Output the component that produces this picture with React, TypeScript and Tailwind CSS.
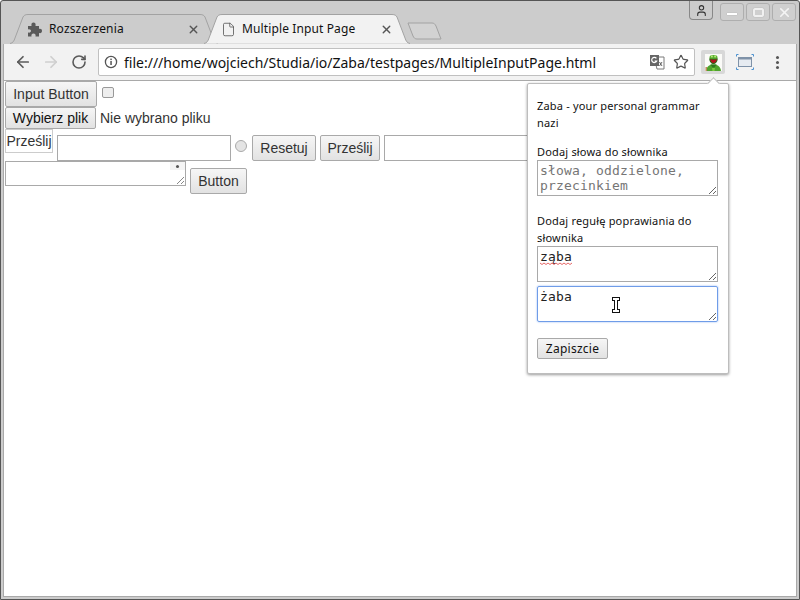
import { ArrowLeft, ArrowRight, RotateCw, Star, File, X, User } from 'lucide-react'

const chrome = { fontFamily: '"Noto Sans", sans-serif' }
const page = { fontFamily: '"Liberation Sans", Arial, sans-serif' }
const mono = { fontFamily: '"DejaVu Sans Mono", monospace' }

function TabShape({ fill, width }: { fill: string; width: number }) {
  return (
    <svg className="absolute inset-0" width={width} height={30} viewBox={`0 0 ${width} 30`}>
      <path
        d={`M0 29.5 C3 29 4 27 5 24 L13 3 C14 1.5 15 0.5 18 0.5 L${width - 18} 0.5 C${width - 15} 0.5 ${width - 14} 1.5 ${width - 13} 3 L${width - 5} 24 C${width - 4} 27 ${width - 3} 29 ${width} 29.5`}
        fill={fill}
        stroke="#a2a2a2"
      />
    </svg>
  )
}

function WinButton({ children }: { children: React.ReactNode }) {
  return (
    <div className="flex h-[18px] w-[24px] items-center justify-center rounded-[3px] border border-[#aeaeae] bg-[#cfcfcf]">
      {children}
    </div>
  )
}

function PageButton({ label, className }: { label: string; className: string }) {
  return (
    <button
      className={`rounded-[2px] border border-[#a9a9a9] bg-gradient-to-b from-[#f6f6f6] to-[#e2e2e2] text-[14px] text-[#333] ${className}`}
    >
      {label}
    </button>
  )
}

function PuzzleIcon() {
  return (
    <svg className="relative" width="15" height="15" viewBox="0 0 15 15">
      <path
        d="M1 4 H4.5 C4 1.5 5 0.5 6.5 0.5 C8 0.5 9 1.5 8.5 4 H12 V7 C14 6.5 15 7.5 15 9 C15 10.5 14 11.5 12 11 V14.5 H8.5 C9 12.5 8 11.5 6.5 11.5 C5 11.5 4 12.5 4.5 14.5 H1 V10.5 C3 11 4 10 4 9 C4 8 3 7 1 7.5 Z"
        fill="#5a5a5a"
      />
    </svg>
  )
}

function Kermit() {
  return (
    <svg width="17" height="17" viewBox="0 0 17 17">
      <rect width="17" height="17" fill="#fbfbf8" />
      <path d="M1 17 C1.5 13 3.5 11.5 6 10.5 H11 C13.5 11.5 15.5 13 16 17 Z" fill="#4fa32c" />
      <path d="M5.5 10.5 H11.5 L9.5 13.5 H7.5 Z" fill="#2f7a1c" />
      <path d="M7 14 H10 L9.5 17 H7.5 Z" fill="#7ccc3f" />
      <path d="M0.5 13 H2 V17 H0.5 Z" fill="#c08a5a" />
      <ellipse cx="8.5" cy="3.4" rx="4" ry="2.4" fill="#5cb032" />
      <circle cx="6.9" cy="2.4" r="1" fill="#b7e67a" />
      <circle cx="10.1" cy="2.4" r="1" fill="#b7e67a" />
      <path d="M4.2 4.2 C6 5 11 5 12.8 4.2 C12.8 8 10.5 10 8.5 10 C6.5 10 4.2 8 4.2 4.2 Z" fill="#2c6e1a" />
      <path d="M5.2 5.2 C7 5.8 10 5.8 11.8 5.2 C11.6 7.6 10 9 8.5 9 C7 9 5.4 7.6 5.2 5.2 Z" fill="#b3141c" />
    </svg>
  )
}

function TranslateIcon() {
  return (
    <svg width="16" height="16" viewBox="0 0 16 16">
      <path d="M5 3 H15 V15 H8 Z" fill="#fff" stroke="#7a7a7a" />
      <rect x="1" y="1" width="9" height="11" fill="#666" />
      <path d="M7.4 4.4 A2.6 2.6 0 1 0 7.6 7.2 H5.6" fill="none" stroke="#fff" strokeWidth="1.2" />
      <path d="M10.5 8 L13 12 M13 8 L10.5 12" stroke="#666" strokeWidth="1" />
    </svg>
  )
}

function CastIcon() {
  return (
    <svg width="18" height="16" viewBox="0 0 18 16">
      <rect x="2.5" y="3.5" width="13" height="9" fill="#e6ebf1" stroke="#7f92a8" />
      <rect x="2.5" y="3.5" width="13" height="2" fill="#7f92a8" />
      <path d="M0.5 2.5 V0.5 H2.5 M15.5 0.5 H17.5 V2.5 M17.5 13.5 V15.5 H15.5 M2.5 15.5 H0.5 V13.5" fill="none" stroke="#4a90d0" />
    </svg>
  )
}

function IBeam() {
  return (
    <svg width="8" height="16" viewBox="0 0 8 16" shapeRendering="crispEdges">
      <path d="M0.5 0.5 H7.5 V3.5 H5.5 V12.5 H7.5 V15.5 H0.5 V12.5 H2.5 V3.5 H0.5 Z" fill="#fff" stroke="#111" />
    </svg>
  )
}

function Popup() {
  const textarea =
    'block w-[181px] border border-[#a9a9a9] px-[2px] py-[2px] text-[13px] leading-[15px] text-[#222] outline-none placeholder:text-[#757575]'
  return (
    <div
      className="absolute left-[526px] top-[82px] h-[291px] w-[202px] rounded-[2px] border border-[#bdbdbd] bg-white px-[9px] pt-[13px] text-[11px] leading-[17px] tracking-[0.18px] text-[#111] shadow-[0_1px_3px_rgba(0,0,0,0.4)]"
      style={chrome}
    >
      <div className="absolute -top-[5px] left-[181px] h-[9px] w-[9px] rotate-45 border-l border-t border-[#bdbdbd] bg-white" />
      <p>Zaba - your personal grammar nazi</p>
      <p className="mt-[12px]">Dodaj słowa do słownika</p>
      <textarea
        readOnly
        placeholder={'słowa, oddzielone, przecinkiem'}
        className={`${textarea} h-[36px]`}
        style={mono}
      />
      <p className="mt-[16px]">Dodaj regułę poprawiania do słownika</p>
      <div className="relative">
        <textarea readOnly defaultValue="ząba" className={`${textarea} h-[36px]`} style={mono} />
        <svg className="absolute left-[3px] top-[16px]" width="32" height="3" viewBox="0 0 32 3">
          <path d="M0 1 L2 2.5 L4 1 L6 2.5 L8 1 L10 2.5 L12 1 L14 2.5 L16 1 L18 2.5 L20 1 L22 2.5 L24 1 L26 2.5 L28 1 L30 2.5 L32 1" fill="none" stroke="#e04040" strokeWidth="0.8" />
        </svg>
      </div>
      <textarea
        readOnly
        defaultValue="żaba"
        className={`${textarea} mt-[4px] h-[36px] rounded-[2px] !border-[#6f9ce8] shadow-[0_0_2px_#8ab0f0]`}
        style={mono}
      />
      <button className="mt-[16px] block h-[21px] w-[71px] rounded-[2px] border border-[#a9a9a9] bg-gradient-to-b from-[#f6f6f6] to-[#e2e2e2] text-[12px] tracking-[0.25px] text-[#111]">
        Zapiszcie
      </button>
      <div className="absolute left-[84px] top-[213px]">
        <IBeam />
      </div>
    </div>
  )
}

export default function App() {
  return (
    <div className="relative flex h-[600px] w-[800px] flex-col overflow-hidden rounded-t-[3px] border border-[#555] bg-[#cccccc] px-[2px] pb-[2px]">
      {/* Title bar with tabs */}
      <div className="relative flex h-[43px] items-end pl-[7px]">
        <div className="relative flex h-[30px] w-[208px] items-center pl-[17px] text-[12px] tracking-[0.15px] text-[#111]" style={chrome}>
          <TabShape fill="#cccccc" width={208} />
          <PuzzleIcon />
          <span className="relative ml-[7px]">Rozszerzenia</span>
          <X className="absolute right-[18px] text-[#555]" size={13} strokeWidth={2.5} />
        </div>
        <div className="relative -ml-[14px] flex h-[30px] w-[206px] items-center pl-[17px] text-[12px] tracking-[0.12px] text-[#111]" style={chrome}>
          <TabShape fill="#f2f2f2" width={206} />
          <File className="relative text-[#555]" size={15} strokeWidth={1.3} />
          <span className="relative ml-[6px]">Multiple Input Page</span>
          <X className="absolute right-[17px] text-[#555]" size={13} strokeWidth={2.5} />
        </div>
        <svg className="-ml-[3px] mb-[4px]" width="36" height="18" viewBox="0 0 36 18">
          <path d="M1 1 H25 C27 1 28 2 29 4 L34 17 H10 C8 17 7 16 6 14 Z" fill="#d2d2d2" stroke="#a2a2a2" />
        </svg>

        <div className="absolute right-[1px] top-0 flex items-start">
          <div className="mr-[7px] flex h-[19px] w-[24px] items-center justify-center rounded-b-[4px] border border-t-0 border-[#888]">
            <User className="text-[#333]" size={13} strokeWidth={2} />
          </div>
          <div className="mt-[2px] flex gap-[2px]">
            <WinButton>
              <span className="mt-[4px] h-[2px] w-[10px] bg-white shadow-[0_0_1px_#888]" />
            </WinButton>
            <WinButton>
              <span className="h-[9px] w-[11px] rounded-[2px] border-2 border-[#f0f0f0] shadow-[0_0_1px_#888]" />
            </WinButton>
            <WinButton>
              <X className="text-[#f4f4f4]" size={15} strokeWidth={2.5} />
            </WinButton>
          </div>
        </div>
      </div>

      {/* Toolbar */}
      <div className="flex h-[37px] shrink-0 items-center border-b border-l border-r border-[#a9a9a9] bg-[#f2f2f2] pl-[10px]">
        <ArrowLeft className="text-[#5a5a5a]" size={18} strokeWidth={2.3} />
        <ArrowRight className="ml-[10px] text-[#cfcfcf]" size={18} strokeWidth={2.3} />
        <RotateCw className="ml-[11px] text-[#5a5a5a]" size={16} strokeWidth={2.4} />
        <div
          className="ml-[11px] flex h-[28px] w-[597px] items-center rounded-[2px] border border-[#c0c0c0] bg-white pl-[5px] pr-[5px] text-[14px] text-[#111]"
          style={chrome}
        >
          <svg width="14" height="14" viewBox="0 0 14 14">
            <circle cx="7" cy="7" r="5.6" fill="none" stroke="#555" strokeWidth="1.3" />
            <rect x="6.3" y="6" width="1.5" height="4" fill="#555" />
            <rect x="6.3" y="3.6" width="1.5" height="1.5" fill="#555" />
          </svg>
          <span className="ml-[6px]">file:///home/wojciech/Studia/io/Zaba/testpages/MultipleInputPage.html</span>
          <span className="ml-auto flex items-center gap-[8px]">
            <TranslateIcon />
            <Star className="text-[#555]" size={16} strokeWidth={1.8} />
          </span>
        </div>
        <div className="ml-[6px] flex h-[24px] w-[24px] items-center justify-center rounded-[2px] bg-[#d8d8d8]">
          <Kermit />
        </div>
        <div className="ml-[11px]">
          <CastIcon />
        </div>
        <div className="ml-[22px] flex flex-col gap-[2px]">
          <span className="h-[3px] w-[3px] rounded-full bg-[#555]" />
          <span className="h-[3px] w-[3px] rounded-full bg-[#555]" />
          <span className="h-[3px] w-[3px] rounded-full bg-[#555]" />
        </div>
      </div>

      {/* Page */}
      <div className="relative flex-1 overflow-hidden border-b border-l border-r border-[#a9a9a9] bg-white pl-[1px] text-[14px] text-[#333]" style={page}>
        <div className="flex h-[26px] items-start">
          <PageButton label="Input Button" className="h-[26px] w-[92px]" />
          <input
            type="checkbox"
            className="ml-[5px] mt-[6px] h-[11px] w-[12px] appearance-none rounded-[2px] border border-[#999] bg-[#eee]"
          />
        </div>
        <div className="flex h-[22px] items-center">
          <button className="h-[22px] w-[91px] rounded-[2px] border border-[#a9a9a9] bg-gradient-to-b from-[#f6f6f6] to-[#e2e2e2] text-[14px] text-[#111]">
            Wybierz plik
          </button>
          <span className="ml-[4px]">Nie wybrano pliku</span>
        </div>
        <div className="flex h-[32px] items-start">
          <div className="flex h-[24px] w-[48px] items-center justify-center border border-[#ccc] text-[14px]">
            Prześlij
          </div>
          <input className="ml-[4px] mt-[6px] h-[26px] w-[174px] border border-[#a9a9a9]" />
          <span className="ml-[4px] mt-[11px] h-[12px] w-[12px] rounded-full border border-[#aaa] bg-[#e4e4e4]" />
          <PageButton label="Resetuj" className="ml-[5px] mt-[6px] h-[26px] w-[64px]" />
          <PageButton label="Prześlij" className="ml-[4px] mt-[6px] h-[26px] w-[60px]" />
          <input className="ml-[4px] mt-[6px] h-[26px] w-[174px] border border-[#a9a9a9]" />
        </div>
        <div className="flex items-start">
          <div className="relative h-[25px] w-[181px] border border-[#a9a9a9]">
            <div className="absolute right-0 top-0 flex h-full w-[15px] flex-col items-center bg-white">
              <div className="flex h-[8px] w-full items-center justify-center bg-[#f4f4f4]">
                <span className="h-[3px] w-[3px] rounded-full bg-[#555]" />
              </div>
              <svg className="absolute bottom-0 right-0" width="10" height="10" viewBox="0 0 10 10">
                <path d="M9 2 L2 9 M9 6 L6 9" stroke="#888" />
              </svg>
            </div>
          </div>
          <PageButton label="Button" className="ml-[4px] mt-[7px] h-[26px] w-[57px]" />
        </div>
      </div>

      <div className="pointer-events-none absolute inset-0">
        <Popup />
      </div>
    </div>
  )
}
